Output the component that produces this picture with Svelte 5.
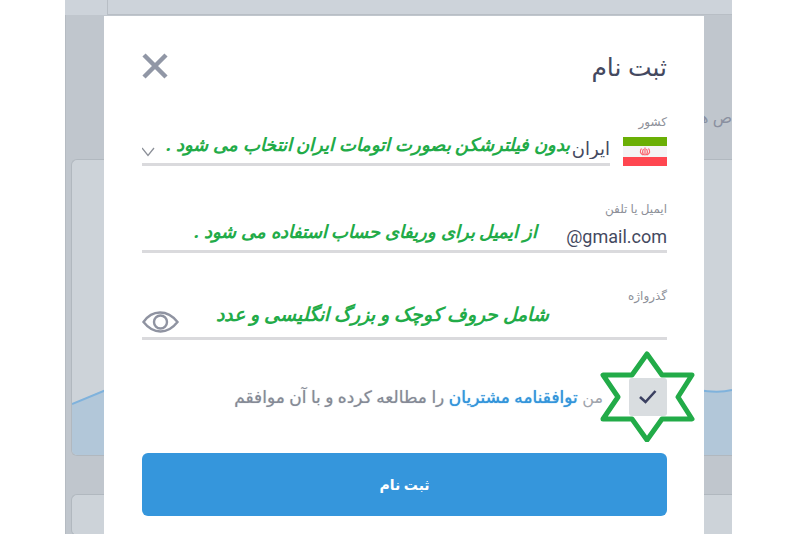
<script lang="ts">
  let country = 'ir'
  let email = '@gmail.com'
  let password = ''
  let agreed = true
  let showPassword = false
</script>

<div class="stage" dir="rtl">
  <div class="backdrop" aria-hidden="true">
    <div class="topbar"></div>
    <div class="page">
      <div class="page-title">ص ها</div>
      <div class="panel chart">
        <svg viewBox="0 0 660 66" preserveAspectRatio="none">
          <path d="M0 15 L34 0 L620 0 Q645 5 660 1 V66 H0 Z" fill="#b2c7d9" />
          <path d="M0 15 L34 1 L620 0 Q645 5 660 1" fill="none" stroke="#7fb2dc" stroke-width="2" />
        </svg>
      </div>
      <div class="panel"></div>
    </div>
  </div>

  <form class="modal" onsubmit={(e) => e.preventDefault()}>
    <header>
      <h1>ثبت نام</h1>
      <button class="close" type="button" aria-label="بستن">
        <svg width="26" height="28" viewBox="0 0 26 28">
          <path d="M2 3 L24 25 M24 3 L2 25" fill="none" stroke="#9197a6" stroke-width="4.5" />
        </svg>
      </button>
    </header>

    <div class="field">
      <label for="country">کشور</label>
      <div class="row">
        <svg class="flag" width="44" height="29" viewBox="0 0 44 29">
          <rect width="44" height="29" fill="#f4f4f5" />
          <rect width="44" height="9" fill="#6aaf05" />
          <rect y="20" width="44" height="9" fill="#ff4650" />
          <g fill="none" stroke="#fb6470" stroke-width="1.2">
            <path d="M22 10.5 V18.5 M20.5 12 Q18.5 15.5 21 18 M23.5 12 Q25.5 15.5 23 18" />
            <path d="M18.5 11.5 Q15.5 15.5 20 18 M25.5 11.5 Q28.5 15.5 24 18" />
          </g>
        </svg>
        <div class="control">
          <select id="country" bind:value={country}>
            <option value="ir">ایران</option>
          </select>
          <svg class="chevron" width="14" height="10" viewBox="0 0 14 10">
            <path d="M0 1 L6 8.5 L12 1" fill="none" stroke="#8b8f98" stroke-width="1.3" />
          </svg>
        </div>
      </div>
      <span class="note first">بدون فیلترشکن بصورت اتومات ایران انتخاب می شود .</span>
    </div>

    <div class="field">
      <label for="email">ایمیل یا تلفن</label>
      <div class="control">
        <input id="email" type="text" dir="ltr" bind:value={email} />
      </div>
      <span class="note second">از ایمیل برای وریفای حساب استفاده می شود .</span>
    </div>

    <div class="field">
      <label for="password">گذرواژه</label>
      <div class="control">
        <input id="password" type={showPassword ? 'text' : 'password'} value={password} />
        <button class="eye" type="button" aria-label="نمایش گذرواژه" onclick={() => (showPassword = !showPassword)}>
          <svg width="38" height="24" viewBox="0 0 38 24">
            <g fill="none" stroke="#8f93a1" stroke-width="2.4">
              <path d="M1.5 12 Q8 2.5 18 2.5 T35.5 12 Q28 21.5 18.5 21.5 T1.5 12 Z" />
              <circle cx="18.5" cy="12" r="6.5" />
            </g>
          </svg>
        </button>
      </div>
      <span class="note third">شامل حروف کوچک و بزرگ انگلیسی و عدد</span>
    </div>

    <div class="agree">
      <div class="tick">
        <input id="agree" type="checkbox" bind:checked={agreed} />
        {#if agreed}
          <svg class="mark" width="38" height="38" viewBox="0 0 38 38">
            <path d="M11 19 L16.5 24 L26.5 13" fill="none" stroke="#3b4061" stroke-width="2.6" />
          </svg>
        {/if}
        <svg class="star" width="96" height="92" viewBox="0 0 96 92">
          <path
            d="M47 4 L62 25 H92 L78 47 L92 69 H62 L47 90 L32 69 H3 L18 47 L3 25 H32 Z"
            fill="none"
            stroke="#22ab48"
            stroke-width="5"
            stroke-linejoin="round"
          />
        </svg>
      </div>
      <label for="agree">
        <span class="me">من</span> <a href="#agreement">توافقنامه مشتریان</a> را مطالعه کرده و با آن موافقم
      </label>
    </div>

    <button class="submit" type="submit">ثبت نام</button>
  </form>
</div>

<style>
  :global(body) {
    background: #ffffff;
    overflow: hidden;
  }

  .stage {
    display: grid;
    grid-template-columns: minmax(0, 1fr);
    min-height: 100vh;
    margin: 0 68px 0 65px;
    font-family: 'Noto Sans', 'DejaVu Sans', sans-serif;
    color: #444960;
  }

  .backdrop,
  .modal {
    grid-area: 1 / 1;
  }

  .backdrop {
    display: flex;
    flex-direction: column;
    background: #c0c6cd;
    overflow: hidden;
  }

  .topbar {
    height: 14px;
    margin-left: 42px;
    border-left: 1px solid #b8bec5;
    background: #cdd3da;
    border-bottom: 1px solid #b8bec5;
    box-shadow: -42px 0 #cdd3da;
  }

  .page {
    flex: 1;
    display: flex;
    flex-direction: column;
    gap: 38px;
    padding-left: 5px;
    border-left: 1px solid #b5bbc2;
  }

  .page-title {
    height: 32px;
    padding-top: 74px;
    font-size: 16px;
    line-height: 56px;
    color: #8a90a0;
  }

  .panel {
    min-height: 40px;
    background: #cdd3d9;
    border: 1px solid #b1b8bf;
    border-right: 0;
    border-radius: 6px 0 0 6px;
    overflow: hidden;
  }

  .chart {
    height: 295px;
    display: flex;
    align-items: flex-end;
  }

  .chart svg {
    width: 100%;
    height: 66px;
  }

  .modal {
    margin: 16px 28px 0 39px;
    padding: 32px 37px 18px 38px;
    background: #ffffff;
  }

  header {
    display: flex;
    align-items: center;
    justify-content: space-between;
    height: 36px;
    margin-bottom: 29px;
  }

  h1 {
    margin: 0;
    font-size: 25px;
    font-weight: 400;
    line-height: 32px;
  }

  button {
    border: 0;
    padding: 0;
    background: none;
    font: inherit;
    cursor: pointer;
  }

  button svg {
    display: block;
  }

  .field {
    position: relative;
    margin-bottom: 34px;
  }

  .field label {
    display: block;
    height: 18px;
    font-size: 12px;
    line-height: 18px;
    color: #8d9099;
  }

  .row {
    display: flex;
    align-items: flex-end;
    gap: 13px;
  }

  .flag {
    flex: none;
  }

  .control {
    position: relative;
    flex: 1;
    height: 32px;
    border-bottom: 3px solid #dadadd;
  }

  .control input,
  .control select {
    width: 100%;
    height: 32px;
    padding: 2px 0 0;
    border: 0;
    outline: 0;
    background: transparent;
    color: #444960;
    font-family: Roboto, 'DejaVu Sans', sans-serif;
    font-size: 18px;
    text-align: right;
    appearance: none;
  }

  .chevron {
    position: absolute;
    left: 0;
    bottom: 6px;
  }

  .eye {
    position: absolute;
    left: 0;
    bottom: 3px;
  }

  .note {
    position: absolute;
    top: 17px;
    font-size: 18px;
    font-style: italic;
    font-weight: 700;
    line-height: 28px;
    color: #22ab48;
    white-space: nowrap;
    pointer-events: none;
  }

  .first {
    right: 97px;
  }

  .second {
    right: 130px;
  }

  .third {
    top: 13px;
    right: 118px;
    font-size: 19px;
  }

  .agree {
    display: flex;
    align-items: center;
    gap: 26px;
    margin: 38px 0 37px;
  }

  .tick {
    position: relative;
    width: 38px;
    height: 38px;
  }

  .tick input {
    display: block;
    width: 38px;
    height: 38px;
    margin: 0;
    border-radius: 3px;
    background: #d9dde0;
    appearance: none;
  }

  .mark,
  .star {
    position: absolute;
    pointer-events: none;
  }

  .mark {
    inset: 0;
  }

  .star {
    top: -28px;
    left: -29px;
  }

  .agree label {
    font-size: 17px;
    line-height: 24px;
    color: #858a96;
    text-shadow: 0 0 1px #b4b7be;
    white-space: nowrap;
  }

  .me {
    font-size: 16px;
    color: #a0a4ad;
    text-shadow: none;
  }

  .agree a {
    color: #3495db;
    text-decoration: none;
    text-shadow: 0 0 1px #3495db;
  }

  .submit {
    display: block;
    width: 100%;
    height: 63px;
    border-radius: 6px;
    background: #3596dc;
    color: #ffffff;
    font-size: 14px;
    font-weight: 700;
  }
</style>
